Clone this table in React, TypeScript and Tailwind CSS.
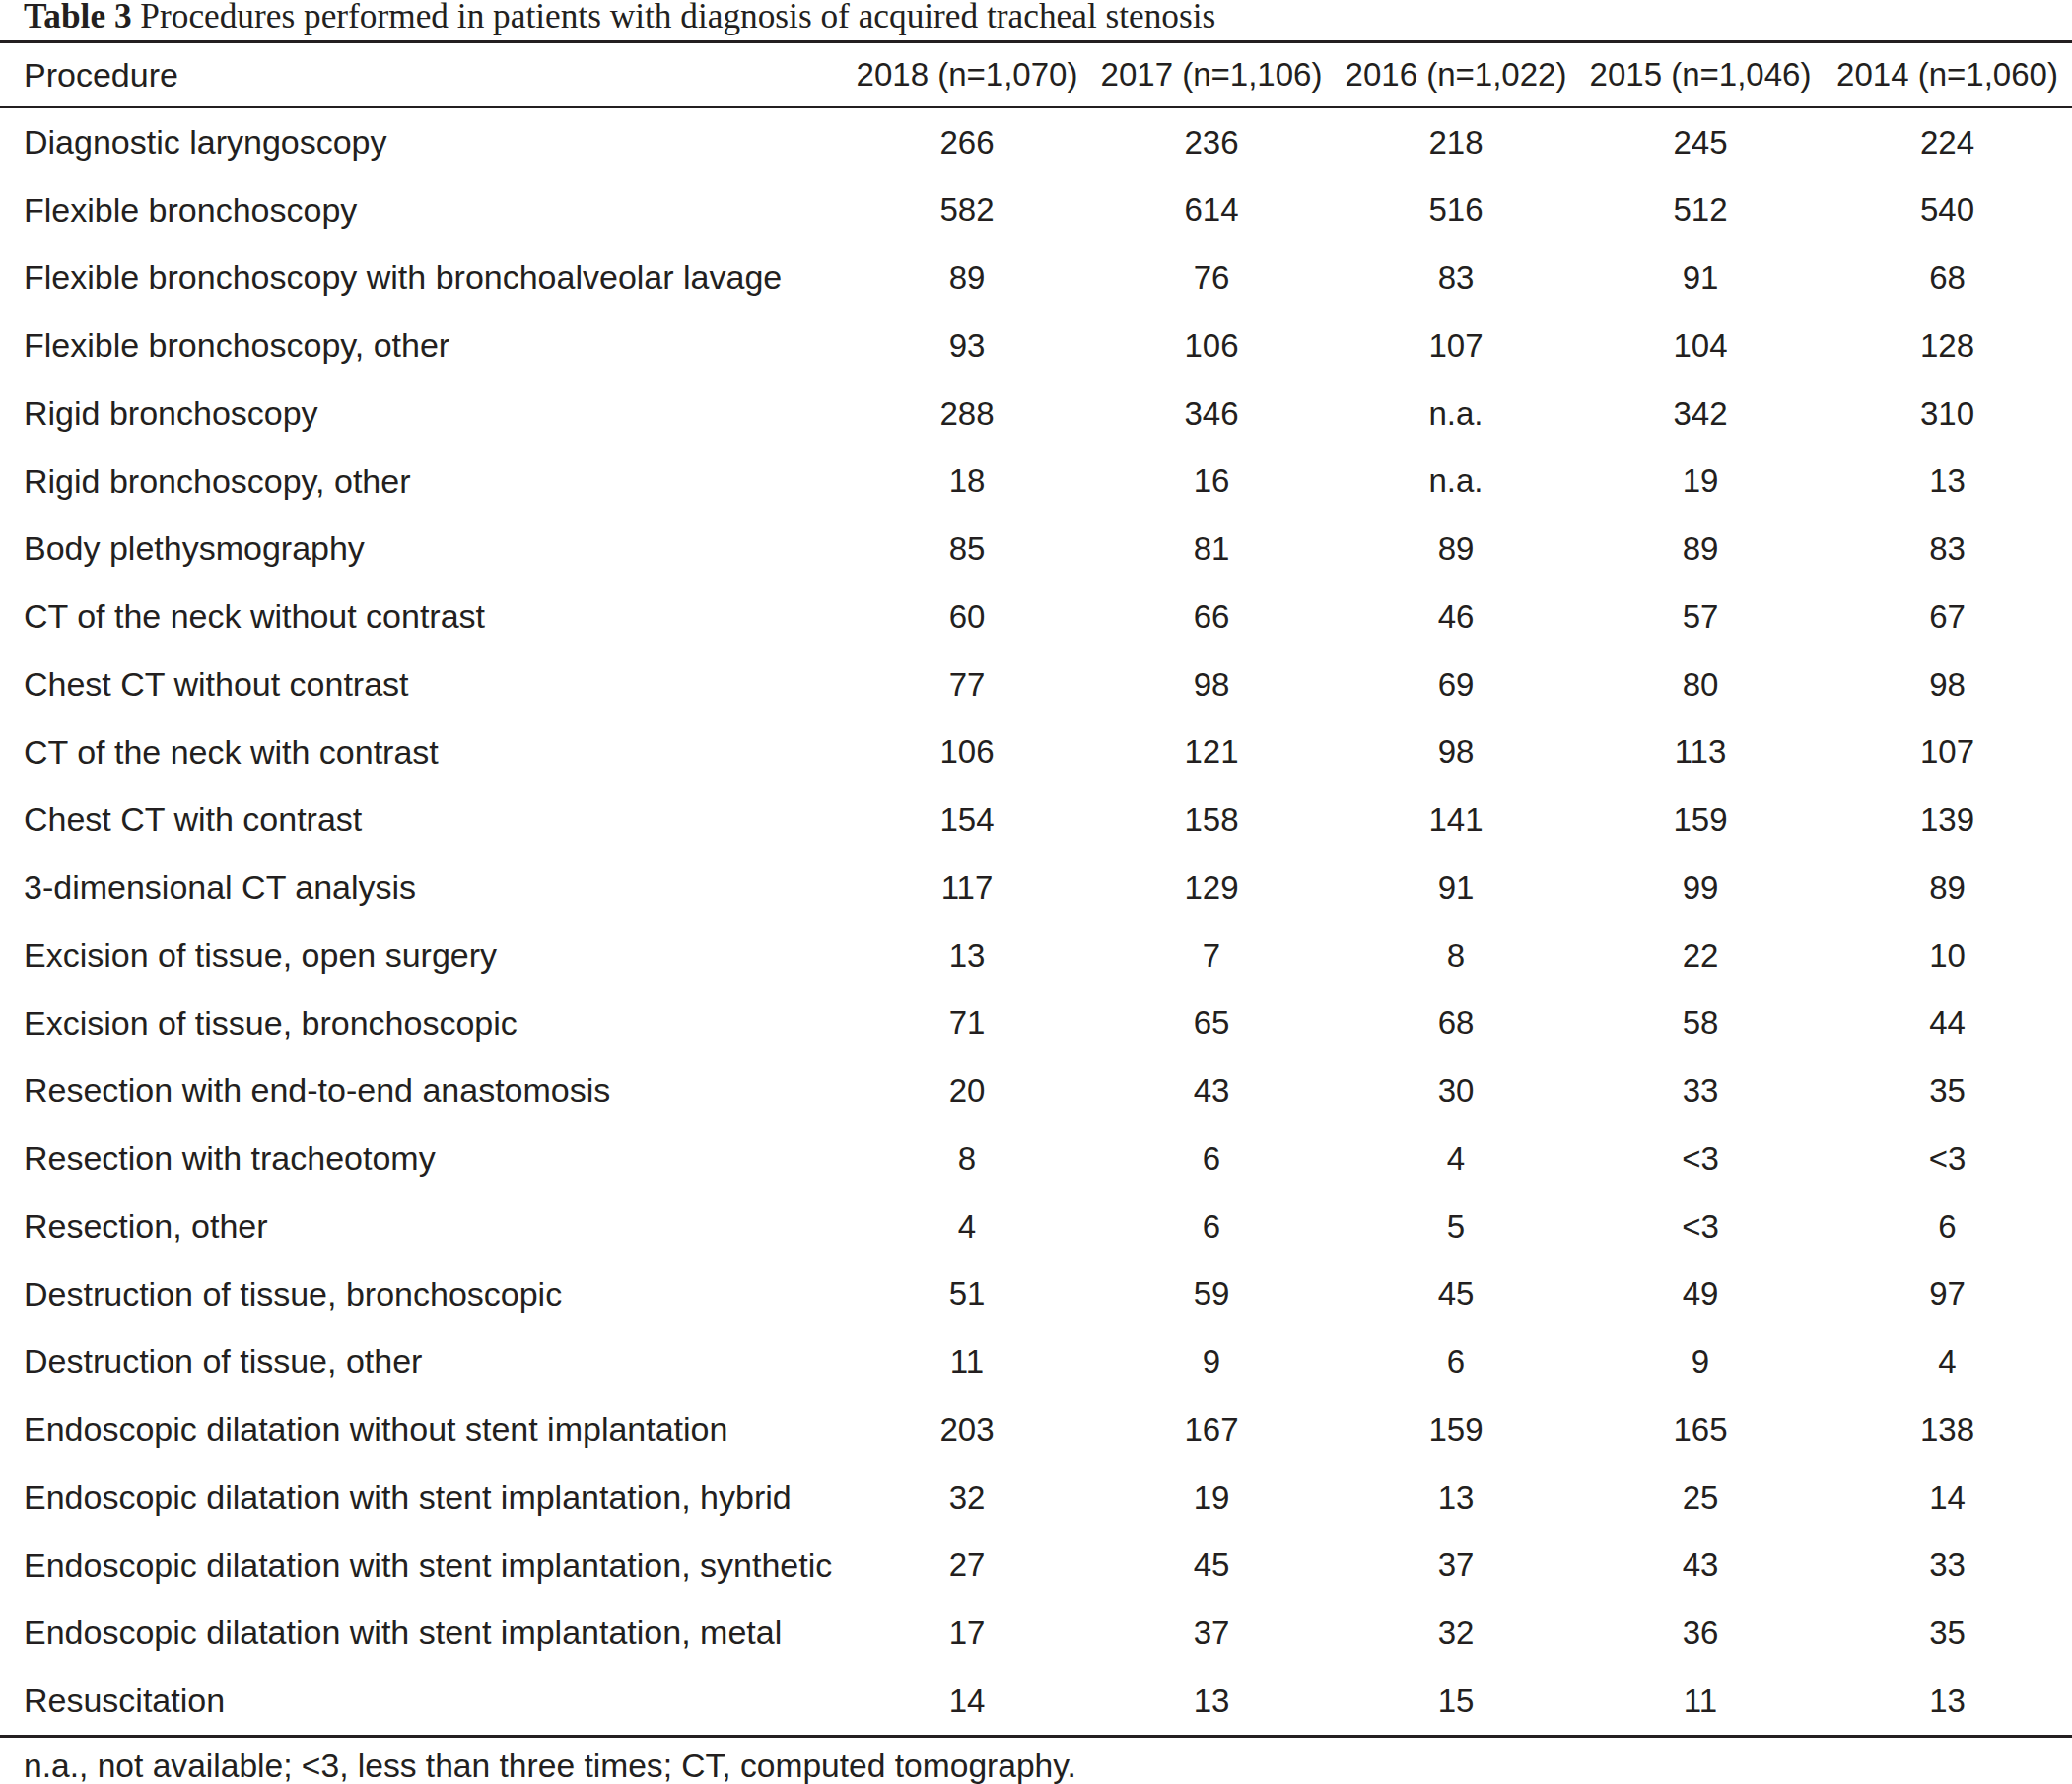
const columns = [
  "2018 (n=1,070)",
  "2017 (n=1,106)",
  "2016 (n=1,022)",
  "2015 (n=1,046)",
  "2014 (n=1,060)",
];

const rows: [string, string[]][] = [
  ["Diagnostic laryngoscopy", ["266", "236", "218", "245", "224"]],
  ["Flexible bronchoscopy", ["582", "614", "516", "512", "540"]],
  ["Flexible bronchoscopy with bronchoalveolar lavage", ["89", "76", "83", "91", "68"]],
  ["Flexible bronchoscopy, other", ["93", "106", "107", "104", "128"]],
  ["Rigid bronchoscopy", ["288", "346", "n.a.", "342", "310"]],
  ["Rigid bronchoscopy, other", ["18", "16", "n.a.", "19", "13"]],
  ["Body plethysmography", ["85", "81", "89", "89", "83"]],
  ["CT of the neck without contrast", ["60", "66", "46", "57", "67"]],
  ["Chest CT without contrast", ["77", "98", "69", "80", "98"]],
  ["CT of the neck with contrast", ["106", "121", "98", "113", "107"]],
  ["Chest CT with contrast", ["154", "158", "141", "159", "139"]],
  ["3-dimensional CT analysis", ["117", "129", "91", "99", "89"]],
  ["Excision of tissue, open surgery", ["13", "7", "8", "22", "10"]],
  ["Excision of tissue, bronchoscopic", ["71", "65", "68", "58", "44"]],
  ["Resection with end-to-end anastomosis", ["20", "43", "30", "33", "35"]],
  ["Resection with tracheotomy", ["8", "6", "4", "<3", "<3"]],
  ["Resection, other", ["4", "6", "5", "<3", "6"]],
  ["Destruction of tissue, bronchoscopic", ["51", "59", "45", "49", "97"]],
  ["Destruction of tissue, other", ["11", "9", "6", "9", "4"]],
  ["Endoscopic dilatation without stent implantation", ["203", "167", "159", "165", "138"]],
  ["Endoscopic dilatation with stent implantation, hybrid", ["32", "19", "13", "25", "14"]],
  ["Endoscopic dilatation with stent implantation, synthetic", ["27", "45", "37", "43", "33"]],
  ["Endoscopic dilatation with stent implantation, metal", ["17", "37", "32", "36", "35"]],
  ["Resuscitation", ["14", "13", "15", "11", "13"]],
];

const grid = "grid grid-cols-[857px_248px_248px_248px_248px_253px] items-center";

export default function App() {
  return (
    <div className="w-[2102px] h-[1810px] bg-white text-[#231f20] font-['Liberation_Sans',Arial,sans-serif]">
      {/* title */}
      <div className="h-[41px] px-[24px] font-['Liberation_Serif','Times_New_Roman',serif] text-[35.3px] leading-[34px] whitespace-nowrap">
        <span className="font-bold">Table 3</span> Procedures performed in patients with diagnosis of acquired tracheal stenosis
      </div>

      <div className="border-t-[3px] border-[#231f20]" />

      {/* header */}
      <div className={`${grid} h-[66px] text-[33px] border-b-[2px] border-[#231f20]`}>
        <div className="pl-[24px] text-[34px]">Procedure</div>
        {columns.map((c) => (
          <div key={c} className="text-center whitespace-nowrap">
            {c}
          </div>
        ))}
      </div>

      {/* body */}
      <div className="border-b-[3px] border-[#231f20]">
        {rows.map(([name, vals]) => (
          <div key={name} className={`${grid} h-[68.75px] text-[33px]`}>
            <div className="pl-[24px] text-[34px] whitespace-nowrap">{name}</div>
            {vals.map((v, i) => (
              <div key={i} className="text-center">
                {v}
              </div>
            ))}
          </div>
        ))}
      </div>

      {/* footnote */}
      <div className="px-[24px] pt-[9px] text-[33.6px] leading-[40px] whitespace-nowrap">
        n.a., not available; &lt;3, less than three times; CT, computed tomography.
      </div>
    </div>
  );
}
